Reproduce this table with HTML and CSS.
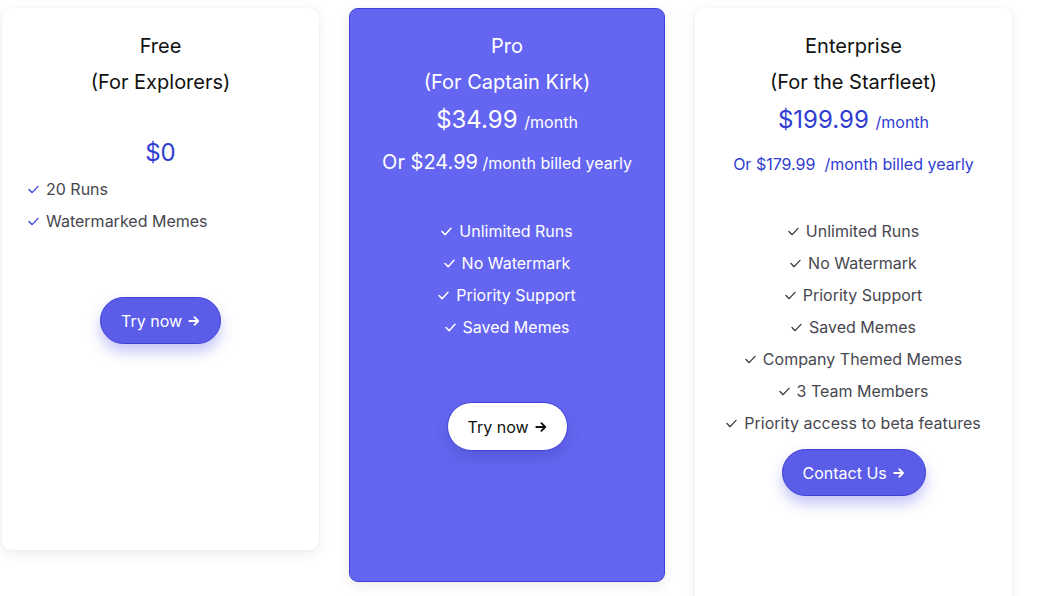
FILE: index.html
```html
<!DOCTYPE html>
<html lang="en">
<head>
<meta charset="utf-8">
<title>Pricing</title>
<link rel="stylesheet" href="styles.css">
</head>
<body>
<main class="plans">
  <section class="card card--free">
    <h2 class="title">Free</h2>
    <p class="title">(For Explorers)</p>
    <p class="price price--free">$0</p>
    <ul class="features features--left">
      <li><svg class="check" viewBox="0 0 12 10"><polyline points="1,5 4.5,8.5 11,1.5"/></svg>20 Runs</li>
      <li><svg class="check" viewBox="0 0 12 10"><polyline points="1,5 4.5,8.5 11,1.5"/></svg>Watermarked Memes</li>
    </ul>
    <a class="btn btn--primary btn--free" href="#">Try now <svg class="arrow" viewBox="0 0 14 14"><path d="M1.5 7h10.5M7.5 2.5 12 7l-4.5 4.5"/></svg></a>
  </section>

  <section class="card card--pro">
    <h2 class="title">Pro</h2>
    <p class="title">(For Captain Kirk)</p>
    <p class="price">$34.99 <span class="per">/month</span></p>
    <p class="yearly yearly--big"><span class="yearly-amount">Or $24.99</span> <span class="per">/month billed yearly</span></p>
    <ul class="features">
      <li><svg class="check" viewBox="0 0 12 10"><polyline points="1,5 4.5,8.5 11,1.5"/></svg>Unlimited Runs</li>
      <li><svg class="check" viewBox="0 0 12 10"><polyline points="1,5 4.5,8.5 11,1.5"/></svg>No Watermark</li>
      <li><svg class="check" viewBox="0 0 12 10"><polyline points="1,5 4.5,8.5 11,1.5"/></svg>Priority Support</li>
      <li><svg class="check" viewBox="0 0 12 10"><polyline points="1,5 4.5,8.5 11,1.5"/></svg>Saved Memes</li>
    </ul>
    <a class="btn btn--light btn--pro" href="#">Try now <svg class="arrow" viewBox="0 0 14 14"><path d="M1.5 7h10.5M7.5 2.5 12 7l-4.5 4.5"/></svg></a>
  </section>

  <section class="card card--ent">
    <h2 class="title">Enterprise</h2>
    <p class="title">(For the Starfleet)</p>
    <p class="price">$199.99 <span class="per">/month</span></p>
    <p class="yearly yearly--ent">Or $179.99 &nbsp;/month billed yearly</p>
    <ul class="features features--ent">
      <li><svg class="check" viewBox="0 0 12 10"><polyline points="1,5 4.5,8.5 11,1.5"/></svg>Unlimited Runs</li>
      <li><svg class="check" viewBox="0 0 12 10"><polyline points="1,5 4.5,8.5 11,1.5"/></svg>No Watermark</li>
      <li><svg class="check" viewBox="0 0 12 10"><polyline points="1,5 4.5,8.5 11,1.5"/></svg>Priority Support</li>
      <li><svg class="check" viewBox="0 0 12 10"><polyline points="1,5 4.5,8.5 11,1.5"/></svg>Saved Memes</li>
      <li><svg class="check" viewBox="0 0 12 10"><polyline points="1,5 4.5,8.5 11,1.5"/></svg>Company Themed Memes</li>
      <li><svg class="check" viewBox="0 0 12 10"><polyline points="1,5 4.5,8.5 11,1.5"/></svg>3 Team Members</li>
      <li><svg class="check" viewBox="0 0 12 10"><polyline points="1,5 4.5,8.5 11,1.5"/></svg>Priority access to beta features</li>
    </ul>
    <a class="btn btn--primary btn--ent" href="#">Contact Us <svg class="arrow" viewBox="0 0 14 14"><path d="M1.5 7h10.5M7.5 2.5 12 7l-4.5 4.5"/></svg></a>
  </section>
</main>
</body>
</html>
```

FILE: styles.css
```css
* { box-sizing: border-box; }

html, body {
  margin: 0;
  padding: 0;
  overflow: hidden;
  background: #ffffff;
}

body {
  font-family: Inter, "Noto Sans", "Liberation Sans", sans-serif;
  color: #111111;
}

.plans {
  display: grid;
  grid-template-columns: 317px 316px 317px;
  column-gap: 30px;
  align-items: start;
  padding: 8px 0 0 2px;
}

.card {
  display: flex;
  flex-direction: column;
  align-items: center;
  padding: 20px 24px;
  background: #ffffff;
  border-radius: 9px;
  box-shadow: 0 4px 14px rgba(0, 0, 0, 0.07), 0 0 3px rgba(0, 0, 0, 0.05);
}

.card--free { height: 542px; }

.card--pro {
  height: 574px;
  background: #6466f1;
  border: 1px solid #3f43dc;
  color: #ffffff;
  padding-top: 19px;
}

.card--ent { height: 600px; }

.title {
  margin: 0;
  font-size: 20px;
  font-weight: 400;
  line-height: 36px;
  text-align: center;
}

.price {
  margin: 0;
  font-size: 24px;
  line-height: 40px;
  color: #2f3dd2;
  text-align: center;
}

.card--pro .price { color: #ffffff; }

.price--free { margin-top: 33px; }

.per {
  font-size: 16px;
}

.yearly {
  margin: 5px 0 0;
  font-size: 16px;
  line-height: 30px;
  color: #2f3dd2;
  text-align: center;
}

.yearly--ent { margin-top: 7px; }

.yearly--big { color: #ffffff; }

.yearly-amount { font-size: 20px; }

.features {
  list-style: none;
  margin: 37px 0 0;
  padding: 0;
  display: flex;
  flex-direction: column;
  align-items: center;
  font-size: 16px;
  line-height: 32px;
  color: #47474f;
}

.features--ent { margin-top: 36px; }

.card--pro .features { color: #ffffff; }

.features li {
  display: flex;
  align-items: center;
  gap: 7px;
}

.features--left {
  align-self: stretch;
  align-items: flex-start;
  margin-top: 0;
  padding-left: 2px;
}

.check {
  width: 11px;
  height: 9px;
  fill: none;
  stroke: #3a3a44;
  stroke-width: 1.5;
  stroke-linecap: round;
  stroke-linejoin: round;
}

.features--left .check { stroke: #3a45d6; }
.card--pro .check { stroke: #ffffff; stroke-width: 1.7; }

.btn {
  display: inline-flex;
  align-items: center;
  justify-content: center;
  gap: 6px;
  height: 47px;
  padding: 0 20px;
  border-radius: 999px;
  font-size: 16px;
  text-decoration: none;
  white-space: nowrap;
}

.btn--primary {
  background: #5b5ce8;
  border: 1px solid #3d3fd6;
  color: #ffffff;
  box-shadow: 0 8px 14px rgba(91, 92, 232, 0.35);
}

.btn--light {
  background: #ffffff;
  border: 1px solid #3d3fd6;
  color: #111111;
  box-shadow: 0 8px 14px rgba(40, 40, 140, 0.2);
}

.btn--free { margin-top: 60px; width: 121px; }
.btn--pro { margin-top: 59px; width: 121px; height: 49px; }
.btn--ent { margin-top: 10px; width: 144px; }

.arrow {
  width: 14px;
  height: 14px;
  fill: none;
  stroke: currentColor;
  stroke-width: 2.2;
  stroke-linecap: round;
  stroke-linejoin: round;
}
```
